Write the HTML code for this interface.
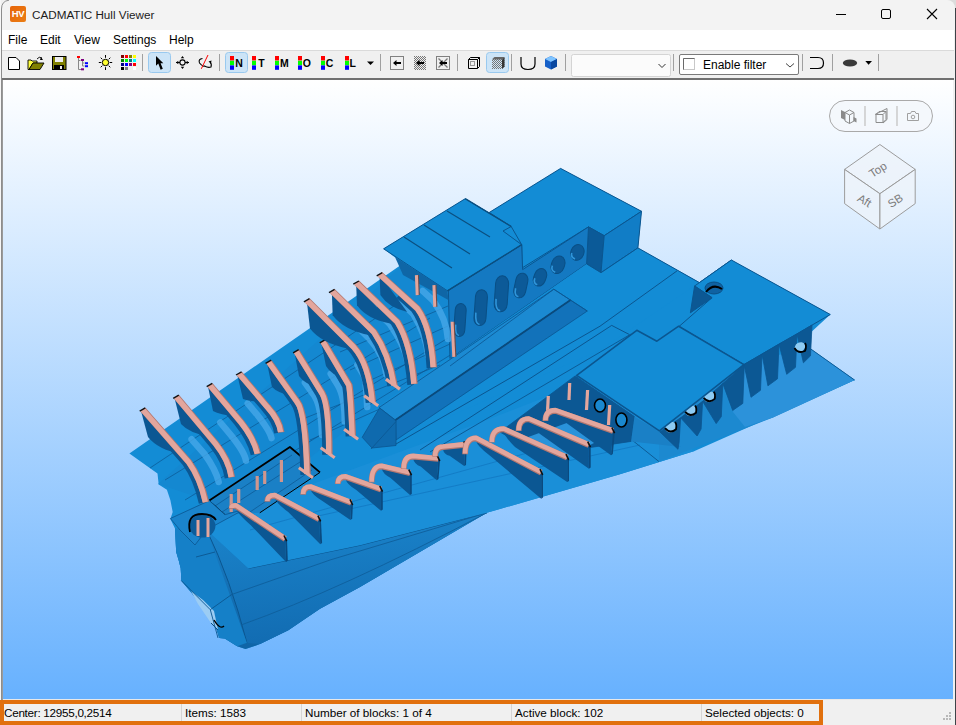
<!DOCTYPE html>
<html><head><meta charset="utf-8">
<style>
*{margin:0;padding:0;box-sizing:border-box}
html,body{width:956px;height:725px;overflow:hidden;background:#f0f0f0;font-family:"Liberation Sans",sans-serif;position:relative}
.a{position:absolute}
#title{left:1px;top:0;width:954px;height:30px;background:#f3f3f3;border-top-left-radius:7px;border-top-right-radius:8px}
#menu{left:2px;top:30px;width:952px;height:20px;background:#ffffff}
.m{position:absolute;top:33px;font-size:12px;color:#000;white-space:nowrap}
.st{position:absolute;top:706px;font-size:11.7px;color:#000;white-space:nowrap}
#vp{left:3px;top:80px;width:950px;height:619px;background:linear-gradient(#ffffff 0%,#67b1fe 100%)}
</style></head><body>
<!-- outer window frame -->
<div class="a" style="left:0;top:0;width:1px;height:725px;background:#f7f7f7"></div>

<div class="a" style="left:955px;top:0;width:1px;height:725px;background:#3d4248"></div>
<div class="a" style="left:948px;top:0;width:8px;height:8px;background:#dcdcdc"></div>
<div id="title" class="a"></div>
<svg class="a" style="left:0;top:0" width="12" height="725"><path d="M1.5 725V9Q1.5 1 9 0.2" fill="none" stroke="#8d8d8d" stroke-width="1"/></svg>
<div class="a" style="left:10px;top:6px;width:16px;height:16px;background:linear-gradient(135deg,#e7650a,#ea7d14);border-radius:2px;color:#fff;font-weight:bold;font-size:9.5px;line-height:16px;text-align:center;letter-spacing:-0.4px">HV</div>
<div class="a" style="left:32px;top:8px;font-size:11.7px;color:#1c1c1c;white-space:nowrap">CADMATIC Hull Viewer</div>
<div class="a" style="left:836px;top:14px;width:10px;height:1px;background:#000"></div>
<div class="a" style="left:881px;top:9px;width:10px;height:10px;border:1px solid #000;border-radius:2px"></div>
<svg class="a" style="left:926px;top:8px" width="12" height="12"><path d="M1 1L11 11M11 1L1 11" stroke="#000" stroke-width="1.1"/></svg>
<div id="menu" class="a"></div>
<div class="m" style="left:8px">File</div><div class="m" style="left:40px">Edit</div><div class="m" style="left:74px">View</div><div class="m" style="left:113px">Settings</div><div class="m" style="left:169px">Help</div>
<!-- toolbar -->
<div class="a" style="left:2px;top:50px;width:952px;height:1px;background:#dadada"></div>
<div class="a" style="left:2px;top:78px;width:952px;height:2px;background:#707070"></div>
<svg class="a" style="left:0;top:0" width="956" height="80">
 <g fill="none" stroke="#a0a0a0">
  <path d="M142.5 54V71M219.5 54V71M380.5 54V71M457.5 54V71M511.5 54V71M565.5 54V71M673.5 54V71M802.5 54V71M832.5 54V71M878.5 54V71"/>
 </g>
 <!-- selected buttons -->
 <rect x="148.5" y="52.5" width="22" height="20" rx="3" fill="#cce4f7" stroke="#99c9ef"/>
 <rect x="225.5" y="52.5" width="22" height="20" rx="3" fill="#cce4f7" stroke="#99c9ef"/>
 <rect x="486.5" y="52.5" width="22" height="20" rx="3" fill="#cce4f7" stroke="#99c9ef"/>
 <!-- new doc -->
 <path d="M8.5 57.5H16L19.5 61V69.5H8.5Z" fill="#fff" stroke="#000"/>
 <!-- open folder -->
 <path d="M28 60H31L32 61H37V63H33L29 69.5H28Z" fill="#ffff40" stroke="#000" stroke-width="0.9"/>
 <path d="M29 69.5L33 63H44L40 69.5Z" fill="#808000" stroke="#000" stroke-width="0.9"/>
 <path d="M37 59Q39 56 42 58" fill="none" stroke="#000" stroke-width="0.9"/><path d="M41 57L43 60L40 60Z" fill="#000"/>
 <!-- save -->
 <rect x="52.5" y="56.5" width="13.5" height="13" fill="#808000" stroke="#000"/>
 <rect x="55" y="57" width="8" height="5" fill="#eee"/>
 <rect x="54" y="65" width="10" height="4.5" fill="#000"/><rect x="60" y="66" width="2" height="3" fill="#eee"/>
 <!-- tree -->
 <rect x="77" y="56" width="3" height="2" fill="#ff0000"/>
 <path d="M78.5 58V69.5H81M78.5 60.5H80.5M82.5 61V66H84.5M82.5 63H84.5" fill="none" stroke="#888"/>
 <rect x="81" y="59" width="3" height="2" fill="#800080"/><rect x="81" y="68.3" width="3" height="2" fill="#800080"/>
 <rect x="85" y="62.2" width="3" height="2" fill="#0000ff"/><rect x="85" y="65.2" width="3" height="2" fill="#0000ff"/>
 <!-- sun -->
 <circle cx="105.5" cy="62.5" r="3.2" fill="#ffff30" stroke="#000" stroke-width="1"/>
 <path d="M105.5 55V57.8M105.5 67.2V70M98.8 62.5H101.3M109.7 62.5H112.2M100.7 57.7L102.3 59.3M108.7 65.7L110.3 67.3M110.3 57.7L108.7 59.3M102.3 65.7L100.7 67.3" stroke="#000" stroke-width="1"/>
 <!-- color grid -->
 <g>
  <rect x="121" y="55" width="3" height="3" fill="#800000"/><rect x="125" y="55" width="3" height="3" fill="#ff0000"/><rect x="129" y="55" width="3" height="3" fill="#808000"/><rect x="133" y="55" width="3" height="3" fill="#ffff00"/>
  <rect x="121" y="59" width="3" height="3" fill="#008000"/><rect x="125" y="59" width="3" height="3" fill="#00ff00"/><rect x="129" y="59" width="3" height="3" fill="#008080"/><rect x="133" y="59" width="3" height="3" fill="#00ffff"/>
  <rect x="121" y="63" width="3" height="3" fill="#000080"/><rect x="125" y="63" width="3" height="3" fill="#0000ff"/><rect x="129" y="63" width="3" height="3" fill="#800080"/><rect x="133" y="63" width="3" height="3" fill="#ff0000"/>
  <rect x="121" y="67" width="3" height="3" fill="#000"/><rect x="125" y="67" width="3" height="3" fill="#808080"/><rect x="133" y="67" width="3" height="3" fill="#ffffff"/>
 </g>
 <!-- arrow pointer -->
 <path d="M156 56V65.7L158.3 63.6L160.6 69.8L162.8 68.8L160.6 63.3L163.3 63.3Z" fill="#000"/>
 <!-- crosshair -->
 <circle cx="182.5" cy="62.5" r="2.6" fill="none" stroke="#000" stroke-width="1.1"/>
 <path d="M182.5 56L180.8 58.3H184.2ZM182.5 69L180.8 66.7H184.2ZM176 62.5L178.3 60.8V64.2ZM189 62.5L186.7 60.8V64.2Z" fill="#000"/>
 <path d="M176 62.5H180M185 62.5H189" stroke="#000"/>
 <!-- red slash -->
 <path d="M202.5 58.5Q198 59 199.5 63Q203 67 204.5 66Q208 68 211 67Q212 64 210 62" fill="none" stroke="#000" stroke-width="1.1"/>
 <path d="M208.5 61.5L211.5 60.5L211 63.5Z" fill="#000"/>
 <path d="M208 55L201.3 68.8" stroke="#f00" stroke-width="1"/>
 <!-- NTMOCL -->
 <g id="bars">
  <rect x="230" y="56" width="4" height="4.5" fill="#f00"/><rect x="230" y="60.8" width="4" height="4.5" fill="#0f0"/><rect x="230" y="65.4" width="4" height="4.4" fill="#00f"/>
 </g>
 <use href="#bars" x="22"/><use href="#bars" x="45"/><use href="#bars" x="68"/><use href="#bars" x="91"/><use href="#bars" x="115"/>
 <g font-family="Liberation Sans" font-weight="bold" font-size="10.5" fill="#000">
  <text x="235.3" y="67">N</text><text x="258.3" y="67">T</text><text x="280" y="67">M</text><text x="302.8" y="67">O</text><text x="325.8" y="67">C</text><text x="349.5" y="67">L</text>
 </g>
 <path d="M367 61.5H374L370.5 65Z" fill="#000"/>
 <!-- arrow boxes -->
 <rect x="390.5" y="56.5" width="13" height="13" fill="none" stroke="#808080"/>
 <path d="M393 63L396.5 60V62H401V64H396.5V66Z" fill="#000"/>
 <pattern id="dith" width="2" height="2" patternUnits="userSpaceOnUse"><rect width="1" height="1" fill="#777"/><rect x="1" y="1" width="1" height="1" fill="#777"/></pattern>
 <rect x="414" y="56" width="12" height="14" fill="url(#dith)"/>
 <path d="M416 63L419.5 60V62H424V64H419.5V66Z" fill="#000"/>
 <rect x="436.5" y="56.5" width="13" height="13" fill="none" stroke="#808080"/>
 <path d="M438.5 58.5L447.5 67.5M447.5 58.5L438.5 67.5" stroke="#7a7a7a" stroke-width="1.3"/>
 <path d="M439 63L442.5 60V62H447V64H442.5V66Z" fill="#000"/>
 <!-- cubes -->
 <path d="M468.5 59.5H477.5V68.5H468.5ZM468.5 59.5L470.5 57.5H479.5V66.5L477.5 68.5M477.5 59.5L479.5 57.5" fill="none" stroke="#000" stroke-width="1"/>
 <rect x="470.5" y="61.5" width="4" height="4" fill="none" stroke="#999"/>
 <path d="M492 59.5L494.5 57H504.5V66.5L502 69H492Z" fill="url(#dith)"/>
 <path d="M502 59.5L504.5 57V66.5L502 69Z" fill="#333"/><path d="M492 59.5L494.5 57H504.5L502 59.5Z" fill="#666"/>
 <path d="M521 57V64Q521 69.5 528 69.5Q535 69.5 535 64V57" fill="none" stroke="#000" stroke-width="1.2"/>
 <path d="M551 56L557 59V66.5L551 69.5L545 66.5V59Z" fill="#1660c8"/>
 <path d="M551 56L557 59L551 62L545 59Z" fill="#7fc4ff"/><path d="M551 62L557 59V66.5L551 69.5Z" fill="#0a48a0"/>
 <!-- combo -->
 <rect x="571.5" y="54.5" width="99" height="22" rx="2" fill="#fbfbfb" stroke="#d4d4d4"/>
 <path d="M658.5 64L662 67.5L665.5 64" fill="none" stroke="#333" stroke-width="1"/>
 <rect x="679.5" y="54.5" width="119" height="20" rx="1.5" fill="#fff" stroke="#7a7a7a"/>
 <rect x="683.5" y="58.5" width="11" height="11" fill="#fff" stroke="#c8c8c8"/>
 <path d="M683.5 69.5V58.5H694.5" fill="none" stroke="#6a6a6a"/>
 <path d="M786 63.5L790 67L794 63.5" fill="none" stroke="#444" stroke-width="1"/>
 <text x="703" y="69" font-family="Liberation Sans" font-size="12" fill="#000">Enable filter</text>
 <path d="M810 57.5H818Q823.5 57.5 823.5 63Q823.5 68.5 818 68.5H810" fill="none" stroke="#000" stroke-width="1.2"/>
 <ellipse cx="850" cy="63" rx="7.2" ry="3.5" fill="#3a3a3a"/>
 <path d="M865.3 61H872L868.6 64.7Z" fill="#000"/>
</svg>
<!-- viewport -->
<div class="a" style="left:2px;top:80px;width:1px;height:620px;background:#9a9a9a"></div>
<div class="a" style="left:953px;top:80px;width:1px;height:620px;background:#f0f0f0"></div>
<div id="vp" class="a"></div>
<svg class="a" style="left:0;top:0" width="956" height="725" viewBox="0 0 956 725">
<defs>
 <linearGradient id="bilge" x1="0" y1="0" x2="0.3" y2="1"><stop offset="0" stop-color="#1a80c8"/><stop offset="1" stop-color="#0f64a6"/></linearGradient>
 <clipPath id="shellclip"><path d="M162 472L403 312L448.4 330L452.6 354L380 405L300 455L280 440L239 470L200 490Z"/></clipPath>
 <linearGradient id="bilge2" x1="0" y1="0" x2="0.2" y2="1"><stop offset="0" stop-color="#1b86cd"/><stop offset="1" stop-color="#126cb2"/></linearGradient>
</defs>
<g stroke-linejoin="round">
<path d="M129.4 453.4L403.0 263.5L383.6 248.8L465.2 198.7L489.2 212.5L560.6 168.4L641.5 211.3L637.9 247.9L699.4 282.6L731.1 259.9L830.3 314.5L811.8 331.4L808.0 347.0L854.7 380.1L694.6 451.0L620.0 474.3L486.8 512.8L360.0 587.0L320.0 608.7L288.3 630.2L260.0 644.1L245.5 649.0L237.2 646.2L224.8 638.6L219.3 638.0L215.2 624.8L191.7 593.1L181.4 580.7L180.7 568.3L178.6 560.0L176.2 551.9L175.0 528.4L170.4 519.0L172.7 512.0L170.4 500.3L166.9 489.8L158.7 484.4L157.5 473.4Z" fill="#138cd5" stroke="none" stroke-width="1" />
<path d="M206.6 529.8L248.6 568.4L360.0 545.3L486.8 512.8L360.0 587.0L320.0 608.7L288.3 630.2L260.0 644.1L245.5 649.0L237.2 646.2L224.8 638.6L219.3 638.0L215.2 624.8L191.7 593.1L181.4 580.7L180.7 568.3L178.6 560.0L176.2 551.9L175.0 528.4Z" fill="url(#bilge)" stroke="none" stroke-width="1" />
<path d="M206.6 529.8Q230.5 579 246.9 642.8L260 644.1L288.3 630.2L320 608.7L360 587L486.8 512.8L360 545.3L248.6 568.4Z" fill="url(#bilge2)" stroke="none" stroke-width="1" />
<path d="M248.6 568.4L360.0 545.3L486.8 512.8" fill="none" stroke="#0b5690" stroke-width="1" />
<path d="M206.6 529.8Q230.5 579 246.9 642.8" fill="none" stroke="#0b5690" stroke-width="1" />
<path d="M231.7 594.5L330 560L486.8 512.8M241 625Q340 590 486.8 512.8" fill="none" stroke="#0e5f9c" stroke-width="0.9" />
<path d="M175.0 528.4L206.6 529.8L246.9 642.8L237.2 646.2L224.8 638.6L219.3 638.0L215.2 624.8L191.7 593.1L181.4 580.7L180.7 568.3L178.6 560.0L176.2 551.9Z" fill="#1580c8" stroke="none" stroke-width="1" />
<path d="M191.0 591.0L203.0 600.0L214.0 611.0L218.0 630.0L211.0 623.0L198.0 604.0Z" fill="#9ccdf4" stroke="none" stroke-width="1" />
<path d="M211.0 623.0L218.0 630.0" fill="none" stroke="#0b4f80" stroke-width="1" />
<path d="M181.4 580.7L210.3 609.7L231.7 594.5M210.3 609.7L218 638M196 557L215 552" fill="none" stroke="#0b5690" stroke-width="0.9" />
<path d="M214 620Q220 630 224 626" fill="none" stroke="#000" stroke-width="1.4" />
<path d="M206.6 529.8L239.0 511.0L486.8 420.0L600.0 376.0L659.4 430.9L694.6 451.0L620.0 474.3L486.8 512.8L360.0 545.3L248.6 568.4Z" fill="#1a8fd8" stroke="none" stroke-width="1" />
<path d="M250 530L610 430M300 520L640 445" fill="none" stroke="#1177c2" stroke-width="0.8" />
<path d="M659.0 461.6L694.6 448.0L773.0 417.4L854.7 380.1L808.0 347.0L744.0 364.5L659.4 430.9Z" fill="#1c89d0" stroke="none" stroke-width="1" />
<path d="M745.0 427.0L773.0 417.4L854.7 380.1L808.0 347.0L744.0 364.5L733.0 412.0Z" fill="#2c92da" stroke="none" stroke-width="1" />
<path d="M632.9 440.7L659.0 461.6" fill="none" stroke="#0b5690" stroke-width="0.9" />
<path d="M808.0 347.0L854.7 380.1" fill="none" stroke="#0b5690" stroke-width="0.9" />
<path d="M158 484L403 264.5L448.4 290L452.6 354L380 405L239 511Z" fill="#1488d1" stroke="none" stroke-width="1" />
<path d="M150 468L403 300M165 480L430 318M185 500L448 338M205 506L452 354" fill="none" stroke="#0b5690" stroke-width="0.7" />
<path d="M340 352L448 306M350 370L448 326M362 384L450 344M300 420L440 365M310 440L445 380" fill="none" stroke="#0b5690" stroke-width="0.7" />
<path d="M489.2 212.5L560.6 168.4L641.5 211.3L604.2 235.7L588.5 226.9L522.0 268.0L521.7 244.7L511.2 226.5Z" fill="#138cd5" stroke="#0b5690" stroke-width="1" />
<path d="M588.5 226.9L604.2 235.7L601.0 272.7L586.6 263.9Z" fill="#0b5a98" stroke="#0b5690" stroke-width="1" />
<path d="M604.2 235.7L641.5 211.3L637.9 247.9L601.0 272.7Z" fill="#117dc6" stroke="#0b5690" stroke-width="1" />
<path d="M448.4 290.5L521.7 244.7L522.6 269.6L588.5 226.9L586.6 263.9L450.0 358.7Z" fill="#1479c2" stroke="#0b5690" stroke-width="1" />
<rect x="454.5" y="303.5" width="11.0" height="33.0" rx="5.5" ry="6.6" transform="rotate(4 460 320)" fill="#0c5a98" stroke="#0a4f85" stroke-width="1"/>
<path d="M456.0 324.95Q456.0 335.5 460 335.5" fill="none" stroke="#2f95da" stroke-width="1.6" transform="rotate(4 460 320)"/>
<rect x="474.7" y="289.6" width="12" height="36" rx="6" ry="7.199999999999999" transform="rotate(4 480.7 307.6)" fill="#0c5a98" stroke="#0a4f85" stroke-width="1"/>
<path d="M476.2 313.0Q476.2 324.6 480.7 324.6" fill="none" stroke="#2f95da" stroke-width="1.6" transform="rotate(4 480.7 307.6)"/>
<rect x="494.9" y="275.8" width="13.0" height="36" rx="6.5" ry="7.8" transform="rotate(4 501.4 293.8)" fill="#0c5a98" stroke="#0a4f85" stroke-width="1"/>
<path d="M496.4 299.2Q496.4 310.8 501.4 310.8" fill="none" stroke="#2f95da" stroke-width="1.6" transform="rotate(4 501.4 293.8)"/>
<rect x="514.8" y="273.0" width="12" height="25.0" rx="6" ry="7.199999999999999" transform="rotate(12 520.8 285.5)" fill="#0c5a98" stroke="#0a4f85" stroke-width="1"/>
<path d="M516.3 289.25Q516.3 297.0 520.8 297.0" fill="none" stroke="#2f95da" stroke-width="1.6" transform="rotate(12 520.8 285.5)"/>
<rect x="534" y="268.3" width="12" height="18" rx="6" ry="7.199999999999999" transform="rotate(20 540 277.3)" fill="#0c5a98" stroke="#0a4f85" stroke-width="1"/>
<path d="M535.5 280.0Q535.5 285.3 540 285.3" fill="none" stroke="#2f95da" stroke-width="1.6" transform="rotate(20 540 277.3)"/>
<rect x="551.5" y="255.8" width="13.0" height="18" rx="6.5" ry="7.8" transform="rotate(20 558 264.8)" fill="#0c5a98" stroke="#0a4f85" stroke-width="1"/>
<path d="M553.0 267.5Q553.0 272.8 558 272.8" fill="none" stroke="#2f95da" stroke-width="1.6" transform="rotate(20 558 264.8)"/>
<rect x="570.9" y="244.4" width="13.0" height="16" rx="6.5" ry="7.8" transform="rotate(20 577.4 252.4)" fill="#0c5a98" stroke="#0a4f85" stroke-width="1"/>
<path d="M572.4 254.8Q572.4 259.4 577.4 259.4" fill="none" stroke="#2f95da" stroke-width="1.6" transform="rotate(20 577.4 252.4)"/>
<path d="M450.0 358.7L586.6 263.9L601.0 272.7L637.9 247.9L699.4 282.6L600.0 350.0L396.0 440.0L362.0 437.0Z" fill="#138cd5" stroke="none" stroke-width="1" />
<path d="M586.6 263.9L601.0 272.7L637.9 247.9" fill="none" stroke="#0b5690" stroke-width="1" />
<path d="M379.0 407.6L553.8 289.2L570.5 300.1L395.5 420.0Z" fill="#1b8ad2" stroke="#0b5690" stroke-width="0.8" />
<path d="M395.5 420.0L570.5 300.1L587.3 311.0L396.0 440.0Z" fill="#1272ba" stroke="#0b5690" stroke-width="0.8" />
<path d="M395.5 420.0L570.5 300.1" fill="none" stroke="#0a4a7c" stroke-width="1.8" />
<path d="M362.2 437.3L379.6 407.9L396.0 420.9L396.0 445.5L372.0 448.0Z" fill="#0f6aae" stroke="#0b5690" stroke-width="0.8" />
<path d="M396.0 421.5L371.0 449.0" fill="none" stroke="#0b5690" stroke-width="0.8" />
<path d="M450.0 366.0L553.8 289.2L587.3 311.0" fill="none" stroke="#0b5690" stroke-width="0.8" />
<path d="M396.0 444.0L600.0 326.2L677.0 270.9" fill="none" stroke="#0b5690" stroke-width="1" />
<path d="M420.0 450.0L611.7 325.4L629.3 334.5" fill="none" stroke="#0b5690" stroke-width="1" />
<path d="M430.0 452.0L630.7 334.2" fill="none" stroke="#0b5690" stroke-width="0.9" />
<path d="M637.9 247.9L699.4 282.6L731.4 260.0" fill="none" stroke="#0b5690" stroke-width="1" />
<path d="M383.6 248.8L465.2 198.7L511.2 226.5L503.0 231.0L521.7 244.7L447.4 290.8Z" fill="#138cd5" stroke="#0b5690" stroke-width="1" />
<path d="M404 237L452 268M424 225L470 254M447 211L490 237" fill="none" stroke="#0b4f80" stroke-width="1.2" />
<path d="M465.2 198.7L511.2 226.5" fill="none" stroke="#0b4f80" stroke-width="1.4" />
<path d="M447.4 290.8L521.7 244.7" fill="none" stroke="#0b4f80" stroke-width="1.4" />
<path d="M395.0 257.0L447.4 290.8L448.4 300.0L403.0 275.0Z" fill="#0f66a6" stroke="none" stroke-width="1" />
<path d="M731.4 260.0L830.3 314.5L744.0 364.5L679.0 326.5L712.0 297.7L694.6 286.0Z" fill="#138cd5" stroke="#0b5690" stroke-width="1" />
<path d="M694.6 286.0L712.1 297.7L690.4 312.8Z" fill="#0c5894" stroke="#0b5690" stroke-width="1" />
<ellipse cx="714" cy="288" rx="9" ry="6" transform="rotate(0 714 288)" fill="#0f62a2" stroke="#0a4f85" stroke-width="1"/>
<path d="M706 292Q713 283 722 289" fill="none" stroke="#000" stroke-width="2" />
<path d="M744.0 364.5L762.0 354.0L760.5 390.3L751.0 397.3Z" fill="#0c5894" stroke="#0b5690" stroke-width="0.8" />
<path d="M762.0 354.0L779.0 344.0L777.5 378.8L767.9 385.8Z" fill="#0c5894" stroke="#0b5690" stroke-width="0.8" />
<path d="M779.0 344.0L797.0 334.0L795.5 367.3L786.7 374.3Z" fill="#0c5894" stroke="#0b5690" stroke-width="0.8" />
<path d="M797.0 334.0L812.0 325.0L810.5 355.8L803.4 362.8Z" fill="#0c5894" stroke="#0b5690" stroke-width="0.8" />
<ellipse cx="800" cy="347" rx="5.5" ry="4.5" transform="rotate(-30 800 347)" fill="#8ecbf3" stroke="none" stroke-width="1"/>
<path d="M794.5 348Q798 354 805 351Q807 346 805 343" fill="none" stroke="#000" stroke-width="1.8" />
<path d="M575.2 375.9L634.5 416.6L631.1 441.4L540.0 455.0L500.0 432.0Z" fill="#0c5894" stroke="#0b5690" stroke-width="0.8" />
<path d="M520.0 440.0L575.0 420.0L600.0 440.0L560.0 460.0Z" fill="#2a93da" stroke="none" stroke-width="1" />
<path d="M634.5 416.6L659.9 431.9L681.0 447.0L631.1 441.4Z" fill="#1a80c6" stroke="none" stroke-width="1" />
<ellipse cx="600" cy="405.5" rx="5.5" ry="6.5" transform="rotate(0 600 405.5)" fill="#1a88cf" stroke="#000" stroke-width="1.6"/>
<ellipse cx="621.4" cy="420" rx="5.5" ry="7" transform="rotate(0 621.4 420)" fill="#1a88cf" stroke="#000" stroke-width="1.6"/>
<path d="M569.7 383L569 400" fill="none" stroke="#e3a69d" stroke-width="3.2" />
<path d="M587.6 390L586.5 410" fill="none" stroke="#e3a69d" stroke-width="3.2" />
<path d="M609.7 405L608.5 425" fill="none" stroke="#e3a69d" stroke-width="3.2" />
<path d="M548.3 396L547.5 412" fill="none" stroke="#e3a69d" stroke-width="3.2" />
<path d="M659.9 431.9L680.6 417.8L679.1 442.3L678.0 449.3Z" fill="#0c5894" stroke="#0b5690" stroke-width="0.8" />
<path d="M680.6 417.8L702.6 401.3L701.1 429.0L697.1 436.0Z" fill="#0c5894" stroke="#0b5690" stroke-width="0.8" />
<path d="M702.6 401.3L722.8 383.4L721.3 416.6L716.2 423.6Z" fill="#0c5894" stroke="#0b5690" stroke-width="0.8" />
<path d="M722.8 383.4L744.3 364.8L742.8 403.4L732.7 410.4Z" fill="#0c5894" stroke="#0b5690" stroke-width="0.8" />
<ellipse cx="671" cy="427.2" rx="6" ry="5" transform="rotate(-30 671 427.2)" fill="#8ecbf3" stroke="none" stroke-width="1"/>
<path d="M665 428.2Q670 434.2 676 429.2Q677 424.2 675 422.2" fill="none" stroke="#000" stroke-width="1.8" />
<ellipse cx="691" cy="410.7" rx="6" ry="5" transform="rotate(-30 691 410.7)" fill="#8ecbf3" stroke="none" stroke-width="1"/>
<path d="M685 411.7Q690 417.7 696 412.7Q697 407.7 695 405.7" fill="none" stroke="#000" stroke-width="1.8" />
<ellipse cx="709.7" cy="396.9" rx="6" ry="5" transform="rotate(-30 709.7 396.9)" fill="#8ecbf3" stroke="none" stroke-width="1"/>
<path d="M703.7 397.9Q708.7 403.9 714.7 398.9Q715.7 393.9 713.7 391.9" fill="none" stroke="#000" stroke-width="1.8" />
<path d="M576.7 375.4L636.8 330.3L656.9 341.2L678.7 326.2L743.9 364.6L659.4 430.9Z" fill="#138cd5" stroke="#0b5690" stroke-width="1.6" />
<path d="M209.3 500.6L289.9 447.0L320.0 472.4L259.8 512.8L225.0 514.7Z" fill="#1a80c6" stroke="none" stroke-width="1" />
<path d="M215 506L292 455M222 512L300 462M250 512L312 470" fill="none" stroke="#0b5690" stroke-width="0.7" />
<path d="M231.2 494L231.2 512" fill="none" stroke="#cf968e" stroke-width="3.2" />
<path d="M238.7 489L238.7 503" fill="none" stroke="#cf968e" stroke-width="3.2" />
<path d="M257.2 476L257.2 490" fill="none" stroke="#cf968e" stroke-width="3.2" />
<path d="M264.7 471L264.7 484" fill="none" stroke="#cf968e" stroke-width="3.2" />
<path d="M281.4 460L281.4 482" fill="none" stroke="#cf968e" stroke-width="3.2" />
<path d="M209.3 500.6L289.9 447.0L320.0 472.4" fill="none" stroke="#000" stroke-width="1.8" />
<path d="M320.0 472.4L259.8 512.8" fill="none" stroke="#000" stroke-width="1" />
<path d="M209.3 500.6L225.0 514.7" fill="none" stroke="#000" stroke-width="1" />
<path d="M170.4 518.5L209.3 500.6L225.0 514.7L245.0 509.0L206.6 529.8L195.0 545.0L180.0 530.0Z" fill="#1a84cc" stroke="#0b5690" stroke-width="0.8" />
<ellipse cx="202.4" cy="526" rx="13" ry="11.5" transform="rotate(0 202.4 526)" fill="#0d5c9a" stroke="none" stroke-width="1"/>
<path d="M208 537L208 518M198 536L198 520" fill="none" stroke="#e3a69d" stroke-width="3" />
<path d="M190 532Q186 514 202 514Q212 514 216 520" fill="none" stroke="#000" stroke-width="1.8" />
<path d="M236.0 508.3L285.2 540.3L286.0 562.0L250.8 525.2Q237.0 513.3 236.0 508.3Z" fill="#0b5793" stroke="none" stroke-width="1" />
<path d="M285.2 540.3L286.0 562.0L287.8 560.8L287.0 539.3Z" fill="#0a4a80" stroke="none" stroke-width="1" />
<path d="M231.5 508.0Q231.5 505.3 236.0 505.3L285.2 538.3" fill="none" stroke="#b27770" stroke-width="5.8" stroke-linecap="butt" stroke-linejoin="round" transform="translate(0 0.7)"/>
<path d="M231.5 508.0Q231.5 505.3 236.0 505.3L285.2 538.3" fill="none" stroke="#e3a69d" stroke-width="4.6" stroke-linecap="butt" stroke-linejoin="round"/>
<path d="M284.0 535.5L286.7 541.1" fill="none" stroke="#111" stroke-width="1.6" />
<path d="M274.9 498.0L319.1 520.5L320.3 544.2L288.2 512.0Q275.9 503.0 274.9 498.0Z" fill="#0b5793" stroke="none" stroke-width="1" />
<path d="M319.1 520.5L320.3 544.2L322.1 543.0L320.9 519.5Z" fill="#0a4a80" stroke="none" stroke-width="1" />
<path d="M267.3 501.0Q267.3 495.0 274.9 495.0L319.1 518.5" fill="none" stroke="#b27770" stroke-width="5.8" stroke-linecap="butt" stroke-linejoin="round" transform="translate(0 0.7)"/>
<path d="M267.3 501.0Q267.3 495.0 274.9 495.0L319.1 518.5" fill="none" stroke="#e3a69d" stroke-width="4.6" stroke-linecap="butt" stroke-linejoin="round"/>
<path d="M317.9 515.7L320.6 521.3" fill="none" stroke="#111" stroke-width="1.6" />
<path d="M310.6 489.5L351.2 504.2L350.4 520.0L322.8 501.2Q311.6 494.5 310.6 489.5Z" fill="#0b5793" stroke="none" stroke-width="1" />
<path d="M351.2 504.2L350.4 520.0L352.2 518.8L353.0 503.2Z" fill="#0a4a80" stroke="none" stroke-width="1" />
<path d="M303.1 494.0Q303.1 486.5 310.6 486.5L351.2 502.2" fill="none" stroke="#b27770" stroke-width="5.8" stroke-linecap="butt" stroke-linejoin="round" transform="translate(0 0.7)"/>
<path d="M303.1 494.0Q303.1 486.5 310.6 486.5L351.2 502.2" fill="none" stroke="#e3a69d" stroke-width="4.6" stroke-linecap="butt" stroke-linejoin="round"/>
<path d="M350.0 499.4L352.7 505.0" fill="none" stroke="#111" stroke-width="1.6" />
<path d="M345.7 479.3L381.0 490.8L381.0 510.8L356.3 490.1Q346.7 484.3 345.7 479.3Z" fill="#0b5793" stroke="none" stroke-width="1" />
<path d="M381.0 490.8L381.0 510.8L382.8 509.6L382.8 489.8Z" fill="#0a4a80" stroke="none" stroke-width="1" />
<path d="M337.8 483.4Q337.8 476.3 345.7 476.3L381.0 488.8" fill="none" stroke="#b27770" stroke-width="5.8" stroke-linecap="butt" stroke-linejoin="round" transform="translate(0 0.7)"/>
<path d="M337.8 483.4Q337.8 476.3 345.7 476.3L381.0 488.8" fill="none" stroke="#e3a69d" stroke-width="4.6" stroke-linecap="butt" stroke-linejoin="round"/>
<path d="M379.8 486.0L382.5 491.6" fill="none" stroke="#111" stroke-width="1.6" />
<path d="M381.8 468.8L410.0 474.4L410.0 495.1L390.3 477.8Q382.8 473.8 381.8 468.8Z" fill="#0b5793" stroke="none" stroke-width="1" />
<path d="M410.0 474.4L410.0 495.1L411.8 493.9L411.8 473.4Z" fill="#0a4a80" stroke="none" stroke-width="1" />
<path d="M371.6 481.8Q371.6 465.8 381.8 465.8L410.0 472.4" fill="none" stroke="#b27770" stroke-width="5.8" stroke-linecap="butt" stroke-linejoin="round" transform="translate(0 0.7)"/>
<path d="M371.6 481.8Q371.6 465.8 381.8 465.8L410.0 472.4" fill="none" stroke="#e3a69d" stroke-width="4.6" stroke-linecap="butt" stroke-linejoin="round"/>
<path d="M408.8 469.6L411.5 475.2" fill="none" stroke="#111" stroke-width="1.6" />
<path d="M413.2 458.9L438.3 460.2L436.7 480.2L420.7 466.6Q414.2 463.9 413.2 458.9Z" fill="#0b5793" stroke="none" stroke-width="1" />
<path d="M438.3 460.2L436.7 480.2L438.5 479.0L440.1 459.2Z" fill="#0a4a80" stroke="none" stroke-width="1" />
<path d="M403.7 468.4Q403.7 455.9 413.2 455.9L438.3 458.2" fill="none" stroke="#b27770" stroke-width="5.8" stroke-linecap="butt" stroke-linejoin="round" transform="translate(0 0.7)"/>
<path d="M403.7 468.4Q403.7 455.9 413.2 455.9L438.3 458.2" fill="none" stroke="#e3a69d" stroke-width="4.6" stroke-linecap="butt" stroke-linejoin="round"/>
<path d="M437.1 455.4L439.8 461.0" fill="none" stroke="#111" stroke-width="1.6" />
<path d="M443.0 449.5L465.0 446.1L464.2 466.1L449.6 455.8Q444.0 454.5 443.0 449.5Z" fill="#0b5793" stroke="none" stroke-width="1" />
<path d="M465.0 446.1L464.2 466.1L466.0 464.9L466.8 445.1Z" fill="#0a4a80" stroke="none" stroke-width="1" />
<path d="M435.1 455.9Q435.1 446.5 443.0 446.5L465.0 444.1" fill="none" stroke="#b27770" stroke-width="5.8" stroke-linecap="butt" stroke-linejoin="round" transform="translate(0 0.7)"/>
<path d="M435.1 455.9Q435.1 446.5 443.0 446.5L465.0 444.1" fill="none" stroke="#e3a69d" stroke-width="4.6" stroke-linecap="butt" stroke-linejoin="round"/>
<path d="M463.8 441.3L466.5 446.9" fill="none" stroke="#111" stroke-width="1.6" />
<path d="M476.0 440.7L541.2 474.0L541.2 498.8L490.0 455.8Q477.0 445.7 476.0 440.7Z" fill="#0b5793" stroke="none" stroke-width="1" />
<path d="M541.2 474.0L541.2 498.8L543.0 497.6L543.0 473.0Z" fill="#0a4a80" stroke="none" stroke-width="1" />
<path d="M465.1 453.6Q465.1 437.7 476.0 437.7L541.2 472.0" fill="none" stroke="#b27770" stroke-width="5.8" stroke-linecap="butt" stroke-linejoin="round" transform="translate(0 0.7)"/>
<path d="M465.1 453.6Q465.1 437.7 476.0 437.7L541.2 472.0" fill="none" stroke="#e3a69d" stroke-width="4.6" stroke-linecap="butt" stroke-linejoin="round"/>
<path d="M540.0 469.2L542.7 474.8" fill="none" stroke="#111" stroke-width="1.6" />
<path d="M503.6 431.5L567.2 459.0L567.2 482.1L515.0 447.0Q504.6 436.5 503.6 431.5Z" fill="#0b5793" stroke="none" stroke-width="1" />
<path d="M567.2 459.0L567.2 482.1L569.0 480.9L569.0 458.0Z" fill="#0a4a80" stroke="none" stroke-width="1" />
<path d="M491.8 441.9Q491.8 428.5 503.6 428.5L567.2 457.0" fill="none" stroke="#b27770" stroke-width="5.8" stroke-linecap="butt" stroke-linejoin="round" transform="translate(0 0.7)"/>
<path d="M491.8 441.9Q491.8 428.5 503.6 428.5L567.2 457.0" fill="none" stroke="#e3a69d" stroke-width="4.6" stroke-linecap="butt" stroke-linejoin="round"/>
<path d="M566.0 454.2L568.7 459.8" fill="none" stroke="#111" stroke-width="1.6" />
<path d="M528.7 421.5L588.9 446.4L588.9 468.7L540.0 434.0Q529.7 426.5 528.7 421.5Z" fill="#0b5793" stroke="none" stroke-width="1" />
<path d="M588.9 446.4L588.9 468.7L590.7 467.5L590.7 445.4Z" fill="#0a4a80" stroke="none" stroke-width="1" />
<path d="M518.6 430.2Q518.6 418.5 528.7 418.5L588.9 444.4" fill="none" stroke="#b27770" stroke-width="5.8" stroke-linecap="butt" stroke-linejoin="round" transform="translate(0 0.7)"/>
<path d="M518.6 430.2Q518.6 418.5 528.7 418.5L588.9 444.4" fill="none" stroke="#e3a69d" stroke-width="4.6" stroke-linecap="butt" stroke-linejoin="round"/>
<path d="M587.7 441.6L590.4 447.2" fill="none" stroke="#111" stroke-width="1.6" />
<path d="M555.4 413.1L613.1 432.4L611.0 455.2L565.0 422.0Q556.4 418.1 555.4 413.1Z" fill="#0b5793" stroke="none" stroke-width="1" />
<path d="M613.1 432.4L611.0 455.2L612.8 454.0L614.9 431.4Z" fill="#0a4a80" stroke="none" stroke-width="1" />
<path d="M545.4 420.2Q545.4 410.1 555.4 410.1L613.1 430.4" fill="none" stroke="#b27770" stroke-width="5.8" stroke-linecap="butt" stroke-linejoin="round" transform="translate(0 0.7)"/>
<path d="M545.4 420.2Q545.4 410.1 555.4 410.1L613.1 430.4" fill="none" stroke="#e3a69d" stroke-width="4.6" stroke-linecap="butt" stroke-linejoin="round"/>
<path d="M611.9 427.6L614.6 433.2" fill="none" stroke="#111" stroke-width="1.6" />
<path d="M175.6 447.3L188.5 462Q200 478 202.7 490.0" fill="none" stroke="#46a7e8" stroke-width="6.5" stroke-linecap="round" opacity="0.8" transform="translate(16 -8)"/>
<path d="M141 411L148 437Q158.1 449.8 181.6 454Z" fill="#0b5793" stroke="none" stroke-width="1" />
<path d="M170.1 441.0L188.5 462Q200 478 205.3 502" fill="none" stroke="#0b5793" stroke-width="6" stroke-linecap="butt" stroke-linejoin="round" transform="translate(-3.5 1)"/>
<path d="M142.5 409.5L188.5 462Q200 478 205.3 502" fill="none" stroke="#b27770" stroke-width="6.4" stroke-linecap="butt" stroke-linejoin="round" transform="translate(0.7 0.3)"/>
<path d="M142.5 409.5L188.5 462Q200 478 205.3 502" fill="none" stroke="#e3a69d" stroke-width="5.4" stroke-linecap="butt" stroke-linejoin="round"/>
<path d="M139.7 411.1L145.3 407.9" fill="none" stroke="#111" stroke-width="1.4" />
<path d="M204.3 430.5L215.3 443.6Q228.7 460.3 229.9 468.6" fill="none" stroke="#46a7e8" stroke-width="6.5" stroke-linecap="round" opacity="0.8" transform="translate(16 -8)"/>
<path d="M174.5 398L181 424Q189.5 433.4 209.4 436.5Z" fill="#0b5793" stroke="none" stroke-width="1" />
<path d="M199.6 424.8L215.3 443.6Q228.7 460.3 231.2 477" fill="none" stroke="#0b5793" stroke-width="6" stroke-linecap="butt" stroke-linejoin="round" transform="translate(-3.5 1)"/>
<path d="M176 396.7L215.3 443.6Q228.7 460.3 231.2 477" fill="none" stroke="#b27770" stroke-width="6.4" stroke-linecap="butt" stroke-linejoin="round" transform="translate(0.7 0.3)"/>
<path d="M176 396.7L215.3 443.6Q228.7 460.3 231.2 477" fill="none" stroke="#e3a69d" stroke-width="5.4" stroke-linecap="butt" stroke-linejoin="round"/>
<path d="M173.2 398.3L178.8 395.09999999999997" fill="none" stroke="#111" stroke-width="1.4" />
<path d="M231.7 411.5L240.4 421.8Q253.8 438.5 255.5 446.1" fill="none" stroke="#46a7e8" stroke-width="6.5" stroke-linecap="round" opacity="0.8" transform="translate(16 -8)"/>
<path d="M208 386.5L213 411Q219.8 415.0 235.8 416.3Z" fill="#0b5793" stroke="none" stroke-width="1" />
<path d="M228.0 407.1L240.4 421.8Q253.8 438.5 257.2 453.6" fill="none" stroke="#0b5793" stroke-width="6" stroke-linecap="butt" stroke-linejoin="round" transform="translate(-3.5 1)"/>
<path d="M209.5 385L240.4 421.8Q253.8 438.5 257.2 453.6" fill="none" stroke="#b27770" stroke-width="6.4" stroke-linecap="butt" stroke-linejoin="round" transform="translate(0.7 0.3)"/>
<path d="M209.5 385L240.4 421.8Q253.8 438.5 257.2 453.6" fill="none" stroke="#e3a69d" stroke-width="5.4" stroke-linecap="butt" stroke-linejoin="round"/>
<path d="M206.7 386.6L212.3 383.4" fill="none" stroke="#111" stroke-width="1.4" />
<path d="M237.3 375L243 399Q249.0 401.2 263 401.9Z" fill="#0b5793" stroke="none" stroke-width="1" />
<path d="M255.8 393.5L267.2 406.9Q279 420 280.6 432" fill="none" stroke="#0b5793" stroke-width="6" stroke-linecap="butt" stroke-linejoin="round" transform="translate(-3.5 1)"/>
<path d="M238.8 373.4L267.2 406.9Q279 420 280.6 432" fill="none" stroke="#b27770" stroke-width="6.4" stroke-linecap="butt" stroke-linejoin="round" transform="translate(0.7 0.3)"/>
<path d="M238.8 373.4L267.2 406.9Q279 420 280.6 432" fill="none" stroke="#e3a69d" stroke-width="5.4" stroke-linecap="butt" stroke-linejoin="round"/>
<path d="M236.0 375.0L241.60000000000002 371.79999999999995" fill="none" stroke="#111" stroke-width="1.4" />
<path d="M288.9 390.6L296.9 401.8Q305.2 412 306.0 442.9" fill="none" stroke="#46a7e8" stroke-width="6.5" stroke-linecap="round" opacity="0.8" transform="translate(16 -8)"/>
<path d="M267 363L272 387Q278.2 393.6 292.6 395.8Z" fill="#0b5793" stroke="none" stroke-width="1" />
<path d="M285.5 385.8L296.9 401.8Q305.2 412 306.9 473.8" fill="none" stroke="#0b5793" stroke-width="6" stroke-linecap="butt" stroke-linejoin="round" transform="translate(-3.5 1)"/>
<path d="M268.4 361.7L296.9 401.8Q305.2 412 306.9 473.8" fill="none" stroke="#b27770" stroke-width="6.4" stroke-linecap="butt" stroke-linejoin="round" transform="translate(0.7 0.3)"/>
<path d="M268.4 361.7L296.9 401.8Q305.2 412 306.9 473.8" fill="none" stroke="#e3a69d" stroke-width="5.4" stroke-linecap="butt" stroke-linejoin="round"/>
<path d="M265.59999999999997 363.3L271.2 360.09999999999997" fill="none" stroke="#111" stroke-width="1.4" />
<path d="M314.7 381.7L322 393.5Q328.7 405 328.7 429.4" fill="none" stroke="#46a7e8" stroke-width="6.5" stroke-linecap="round" opacity="0.8" transform="translate(16 -8)"/>
<path d="M294.5 352.5L299 376Q304.7 384.2 318 387Z" fill="#0b5793" stroke="none" stroke-width="1" />
<path d="M311.6 376.6L322 393.5Q328.7 405 328.7 453.7" fill="none" stroke="#0b5793" stroke-width="6" stroke-linecap="butt" stroke-linejoin="round" transform="translate(-3.5 1)"/>
<path d="M295.9 351.2L322 393.5Q328.7 405 328.7 453.7" fill="none" stroke="#b27770" stroke-width="6.4" stroke-linecap="butt" stroke-linejoin="round" transform="translate(0.7 0.3)"/>
<path d="M295.9 351.2L322 393.5Q328.7 405 328.7 453.7" fill="none" stroke="#e3a69d" stroke-width="5.4" stroke-linecap="butt" stroke-linejoin="round"/>
<path d="M293.09999999999997 352.8L298.7 349.59999999999997" fill="none" stroke="#111" stroke-width="1.4" />
<path d="M341.4 372.8L348.7 385.1Q350.4 395 351.2 415.1" fill="none" stroke="#46a7e8" stroke-width="6.5" stroke-linecap="round" opacity="0.8" transform="translate(16 -8)"/>
<path d="M321.2 342.5L326 366Q331.6 375.4 344.8 378.5Z" fill="#0b5793" stroke="none" stroke-width="1" />
<path d="M338.3 367.5L348.7 385.1Q350.4 395 352.1 435.3" fill="none" stroke="#0b5793" stroke-width="6" stroke-linecap="butt" stroke-linejoin="round" transform="translate(-3.5 1)"/>
<path d="M322.6 341.2L348.7 385.1Q350.4 395 352.1 435.3" fill="none" stroke="#b27770" stroke-width="6.4" stroke-linecap="butt" stroke-linejoin="round" transform="translate(0.7 0.3)"/>
<path d="M322.6 341.2L348.7 385.1Q350.4 395 352.1 435.3" fill="none" stroke="#e3a69d" stroke-width="5.4" stroke-linecap="butt" stroke-linejoin="round"/>
<path d="M319.8 342.8L325.40000000000003 339.59999999999997" fill="none" stroke="#111" stroke-width="1.4" />
<path d="M340.5 333.9L353.6 347Q368.7 363.8 370.4 382.8" fill="none" stroke="#46a7e8" stroke-width="6.5" stroke-linecap="round" opacity="0.8" transform="translate(16 -8)"/>
<path d="M306.7 300.2L310 328.6Q321.6 343.7 348.6 348.7Z" fill="#0b5793" stroke="none" stroke-width="1" />
<path d="M334.8 328.3L353.6 347Q368.7 363.8 372.2 401.8" fill="none" stroke="#0b5793" stroke-width="6" stroke-linecap="butt" stroke-linejoin="round" transform="translate(-3.5 1)"/>
<path d="M306.7 300.2L353.6 347Q368.7 363.8 372.2 401.8" fill="none" stroke="#b27770" stroke-width="6.4" stroke-linecap="butt" stroke-linejoin="round" transform="translate(0.7 0.3)"/>
<path d="M306.7 300.2L353.6 347Q368.7 363.8 372.2 401.8" fill="none" stroke="#e3a69d" stroke-width="5.4" stroke-linecap="butt" stroke-linejoin="round"/>
<path d="M303.9 301.8L309.5 298.59999999999997" fill="none" stroke="#111" stroke-width="1.4" />
<path d="M362.0 320.5L373.7 332Q388.7 353.7 391.3 369.4" fill="none" stroke="#46a7e8" stroke-width="6.5" stroke-linecap="round" opacity="0.8" transform="translate(16 -8)"/>
<path d="M331.8 291L332.7 315.2Q344.0 330.3 370.3 335.3Z" fill="#0b5793" stroke="none" stroke-width="1" />
<path d="M356.9 315.6L373.7 332Q388.7 353.7 393.9 385.1" fill="none" stroke="#0b5793" stroke-width="6" stroke-linecap="butt" stroke-linejoin="round" transform="translate(-3.5 1)"/>
<path d="M331.8 291L373.7 332Q388.7 353.7 393.9 385.1" fill="none" stroke="#b27770" stroke-width="6.4" stroke-linecap="butt" stroke-linejoin="round" transform="translate(0.7 0.3)"/>
<path d="M331.8 291L373.7 332Q388.7 353.7 393.9 385.1" fill="none" stroke="#e3a69d" stroke-width="5.4" stroke-linecap="butt" stroke-linejoin="round"/>
<path d="M329.0 292.6L334.6 289.4" fill="none" stroke="#111" stroke-width="1.4" />
<path d="M385.6 310.9L397.1 321.9Q410.5 343.7 412.1 363.7" fill="none" stroke="#46a7e8" stroke-width="6.5" stroke-linecap="round" opacity="0.8" transform="translate(16 -8)"/>
<path d="M356.1 282.6L357 305.2Q367.0 319.0 390.4 323.6Z" fill="#0b5793" stroke="none" stroke-width="1" />
<path d="M380.7 306.2L397.1 321.9Q410.5 343.7 413.8 383.7" fill="none" stroke="#0b5793" stroke-width="6" stroke-linecap="butt" stroke-linejoin="round" transform="translate(-3.5 1)"/>
<path d="M356.1 282.6L397.1 321.9Q410.5 343.7 413.8 383.7" fill="none" stroke="#b27770" stroke-width="6.4" stroke-linecap="butt" stroke-linejoin="round" transform="translate(0.7 0.3)"/>
<path d="M356.1 282.6L397.1 321.9Q410.5 343.7 413.8 383.7" fill="none" stroke="#e3a69d" stroke-width="5.4" stroke-linecap="butt" stroke-linejoin="round"/>
<path d="M353.3 284.20000000000005L358.90000000000003 281.0" fill="none" stroke="#111" stroke-width="1.4" />
<path d="M406.6 298.9L417.2 308.5Q430.6 327 431.9 347.1" fill="none" stroke="#46a7e8" stroke-width="6.5" stroke-linecap="round" opacity="0.8" transform="translate(16 -8)"/>
<path d="M379.5 274.2L380.4 295.1Q388.4 307.7 407.2 311.9Z" fill="#0b5793" stroke="none" stroke-width="1" />
<path d="M402.1 294.8L417.2 308.5Q430.6 327 433.1 367.1" fill="none" stroke="#0b5793" stroke-width="6" stroke-linecap="butt" stroke-linejoin="round" transform="translate(-3.5 1)"/>
<path d="M379.5 274.2L417.2 308.5Q430.6 327 433.1 367.1" fill="none" stroke="#b27770" stroke-width="6.4" stroke-linecap="butt" stroke-linejoin="round" transform="translate(0.7 0.3)"/>
<path d="M379.5 274.2L417.2 308.5Q430.6 327 433.1 367.1" fill="none" stroke="#e3a69d" stroke-width="5.4" stroke-linecap="butt" stroke-linejoin="round"/>
<path d="M376.7 275.8L382.3 272.59999999999997" fill="none" stroke="#111" stroke-width="1.4" />
<path d="M298.9 467.8L312.9 477.8" fill="none" stroke="#e3a69d" stroke-width="3.2" />
<path d="M320.7 447.7L334.7 457.7" fill="none" stroke="#e3a69d" stroke-width="3.2" />
<path d="M344.1 429.3L358.1 439.3" fill="none" stroke="#e3a69d" stroke-width="3.2" />
<path d="M364.2 395.8L378.2 405.8" fill="none" stroke="#e3a69d" stroke-width="3.2" />
<path d="M385.9 379.1L399.9 389.1" fill="none" stroke="#e3a69d" stroke-width="3.2" />
<path d="M417.2 275.1L418.0 295.1" fill="none" stroke="#6a4a48" stroke-width="3.6" />
<path d="M416.4 275.1L417.2 295.1" fill="none" stroke="#e3a69d" stroke-width="3" />
<path d="M434.7 285.1L435.6 306.9" fill="none" stroke="#6a4a48" stroke-width="3.6" />
<path d="M433.9 285.1L434.8 306.9" fill="none" stroke="#e3a69d" stroke-width="3" />
<path d="M452.90000000000003 321.8L454.6 356.9" fill="none" stroke="#6a4a48" stroke-width="3.6" />
<path d="M452.1 321.8L453.8 356.9" fill="none" stroke="#e3a69d" stroke-width="3" />
</g>
</svg><svg class="a" style="left:0;top:0" width="956" height="725" viewBox="0 0 956 725">
 <rect x="829.5" y="100.5" width="103" height="31" rx="15.5" fill="#f3f7fb" fill-opacity="0.85" stroke="#a9a9a9"/>
 <path d="M865 106V126M897 106V126" stroke="#cdcdcd" stroke-width="1.6"/>
 <g fill="none" stroke="#8c8c8c" stroke-width="1">
  <path d="M845 112.5L849.5 110L854 112.5V121L849.5 123.5L845 121ZM845 112.5L849.5 115L854 112.5M849.5 115V123.5"/>
  <path d="M876 114.5H883V122.5H876ZM876 114.5L879 111.5H886V119.5L883 122.5M883 114.5L886 111.5"/>
  <path d="M875 114.5L887 108.5V119.5L883 123" stroke="#8c8c8c"/>
  <path d="M907.5 113.5H910.5L911.5 111.5H915L916 113.5H918.5V120.5H907.5Z" stroke="#a0a0a0"/>
  <circle cx="913" cy="117" r="1.8" stroke="#a0a0a0"/>
 </g>
 <path d="M841 110L845 112V120L841 118ZM853.5 117L856.5 118.5V122.5L853.5 121Z" fill="#8a8a8a"/>
 <g stroke="#9c9c9c" stroke-width="1" fill="#eef3f9" fill-opacity="0.75">
  <path d="M879.9 144.5L915.2 169.4L879.9 193.7L844.6 169.4Z"/>
  <path d="M844.6 169.4L879.9 193.7V229L844.6 203.6Z"/>
  <path d="M915.2 169.4L879.9 193.7V229L915.2 203.6Z"/>
 </g>
 <g font-family="Liberation Sans" font-size="11.5" fill="#7d7d7d" text-anchor="middle">
  <text transform="translate(880 173) rotate(-33)">Top</text>
  <text transform="translate(862.5 204) rotate(30)">Aft</text>
  <text transform="translate(897.5 204) rotate(-33)">SB</text>
 </g>
</svg>
<div class="a" style="left:3px;top:699px;width:950px;height:1px;background:#e8e8e8"></div>
<!-- status bar -->
<div class="st" style="left:4px;letter-spacing:-0.28px">Center: 12955,0,2514</div>
<div class="st" style="left:185px">Items: 1583</div>
<div class="st" style="left:305px">Number of blocks: 1 of 4</div>
<div class="st" style="left:515px">Active block: 102</div>
<div class="st" style="left:705px">Selected objects: 0</div>
<div class="a" style="left:181px;top:704px;width:1px;height:17px;background:#d5d5d5"></div>
<div class="a" style="left:301px;top:704px;width:1px;height:17px;background:#d5d5d5"></div>
<div class="a" style="left:511px;top:704px;width:1px;height:17px;background:#d5d5d5"></div>
<div class="a" style="left:701px;top:704px;width:1px;height:17px;background:#d5d5d5"></div>
<div class="a" style="left:0;top:700px;width:823px;height:25px;border:4px solid #e1700e"></div>
<svg class="a" style="left:940px;top:710px" width="14" height="14"><g fill="#b8b8b8"><rect x="9" y="2" width="2" height="2"/><rect x="6" y="5" width="2" height="2"/><rect x="9" y="5" width="2" height="2"/><rect x="3" y="8" width="2" height="2"/><rect x="6" y="8" width="2" height="2"/><rect x="9" y="8" width="2" height="2"/></g></svg>
</body></html>
